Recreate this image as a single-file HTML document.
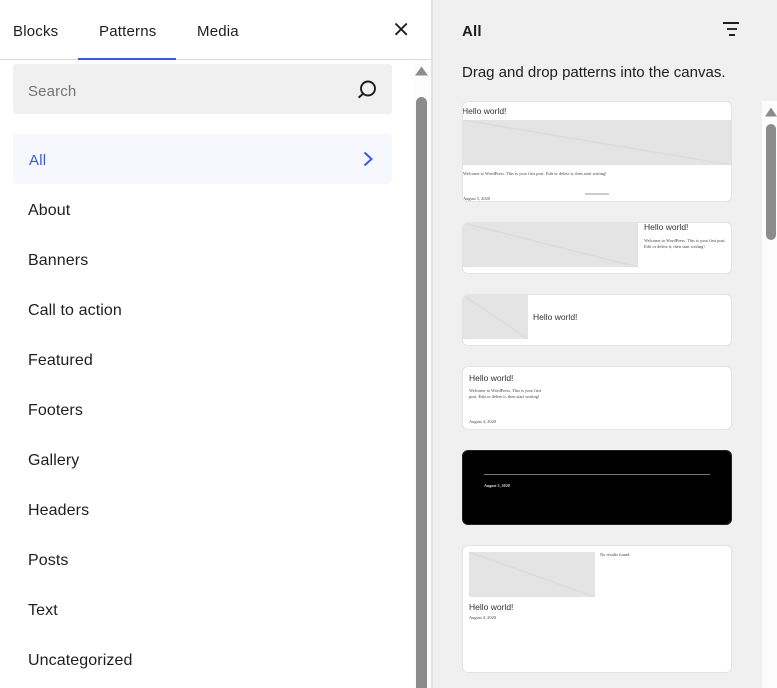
<!DOCTYPE html>
<html>
<head>
<meta charset="utf-8">
<style>
*{box-sizing:border-box}
html,body{margin:0;padding:0;width:777px;height:688px;overflow:hidden;background:#f0f0f0;font-family:"Liberation Sans",sans-serif;color:#1e1e1e}
.a{position:absolute}
.t{position:absolute;white-space:nowrap;font-size:15px;line-height:20px;letter-spacing:.2px}
.l{position:absolute;left:28px;white-space:nowrap;font-size:16px;line-height:20px;letter-spacing:.1px}
.card{position:absolute;left:462px;width:270px;background:#fff;border:1px solid #e4e4e4;border-radius:6px;overflow:hidden}
.ph{position:absolute;background:#e4e4e4;overflow:hidden}
.ph svg{position:absolute;left:0;top:0;width:100%;height:100%}
.h{position:absolute;white-space:nowrap;font-size:8.5px;line-height:11px;color:#333}
.s{position:absolute;white-space:nowrap;font-size:4.4px;line-height:6px;color:#444;font-family:"Liberation Serif",serif}
</style>
</head>
<body>
<div class="a" style="left:0;top:0;width:431px;height:688px;background:#fff"></div>
<div class="a" style="left:431px;top:0;width:2px;height:688px;background:#e2e2e2"></div>
<div class="a" style="left:0;top:59px;width:431px;height:1px;background:#dcdcdc"></div>
<div class="a" style="left:78px;top:58px;width:98px;height:2px;background:#3858e9"></div>

<div class="t" style="left:13px;top:22px">Blocks</div>
<div class="t" style="left:99px;top:22px">Patterns</div>
<div class="t" style="left:197px;top:22px">Media</div>
<svg class="a" style="left:394px;top:22px" width="14" height="14" viewBox="0 0 14 14"><path d="M1.5 1.5L12.8 12.8M12.8 1.5L1.5 12.8" stroke="#1e1e1e" stroke-width="1.9" fill="none"/></svg>

<div class="a" style="left:13px;top:64px;width:379px;height:50px;background:#f0f0f0;border-radius:3px"></div>
<div class="t" style="left:28px;top:82px;color:#757575;letter-spacing:.15px">Search</div>
<svg class="a" style="left:356px;top:78px" width="22" height="22" viewBox="0 0 22 22"><circle cx="12" cy="10.5" r="7" stroke="#1e1e1e" stroke-width="1.9" fill="none"/><path d="M7.4 15.5L2.6 19.6" stroke="#1e1e1e" stroke-width="2" fill="none"/></svg>

<div class="a" style="left:13px;top:134px;width:379px;height:50px;background:#f7f8fe;border-radius:3px"></div>
<div class="t" style="left:29px;top:151px;color:#3858e9">All</div>
<svg class="a" style="left:360px;top:150px" width="16" height="18" viewBox="0 0 16 18"><path d="M4.5 2.5L11.5 9L4.5 15.5" stroke="#3858e9" stroke-width="2" fill="none"/></svg>

<div class="l" style="top:201px">About</div>
<div class="l" style="top:251px">Banners</div>
<div class="l" style="top:301px">Call to action</div>
<div class="l" style="top:351px">Featured</div>
<div class="l" style="top:401px">Footers</div>
<div class="l" style="top:451px">Gallery</div>
<div class="l" style="top:501px">Headers</div>
<div class="l" style="top:551px">Posts</div>
<div class="l" style="top:601px">Text</div>
<div class="l" style="top:651px">Uncategorized</div>

<div class="a" style="left:413px;top:60px;width:18px;height:628px;background:#fcfcfc"></div>
<div class="a" style="left:416px;top:97px;width:11px;height:591px;background:#8c8c8c;border-radius:6px 6px 0 0"></div>
<svg class="a" style="left:415px;top:66px" width="13" height="10" viewBox="0 0 13 10"><path d="M6.5 0.5L13 9.5H0Z" fill="#8c8c8c"/></svg>

<div class="t" style="left:462px;top:22px;font-weight:bold">All</div>
<div class="a" style="left:723px;top:22px;width:16px;height:2px;background:#1e1e1e"></div>
<div class="a" style="left:727px;top:28px;width:10px;height:2px;background:#333"></div>
<div class="a" style="left:729px;top:34px;width:6px;height:2px;background:#1e1e1e"></div>
<div class="t" style="left:462px;top:63px;letter-spacing:0">Drag and drop patterns into the canvas.</div>

<div class="card" style="top:101px;height:101px">
  <div class="h" style="left:-1px;top:4px">Hello world!</div>
  <div class="ph" style="left:0;top:18px;width:269px;height:45px">
    <svg viewBox="0 0 269 45" preserveAspectRatio="none"><path d="M0 0L269 45" stroke="#dcdcdc" stroke-width="1.5" fill="none"/></svg>
  </div>
  <div class="s" style="left:0;top:69px">Welcome to WordPress. This is your first post. Edit or delete it, then start writing!</div>
  <div class="a" style="left:122px;top:91px;width:24px;height:2px;background:#ccc"></div>
  <div class="s" style="left:0;top:94px">August 5, 2020</div>
</div>

<div class="card" style="top:222px;height:52px">
  <div class="ph" style="left:0;top:0;width:175px;height:44px">
    <svg viewBox="0 0 175 44" preserveAspectRatio="none"><path d="M0 0L175 44" stroke="#dcdcdc" stroke-width="1.5" fill="none"/></svg>
  </div>
  <div class="h" style="left:181px;top:-1px">Hello world!</div>
  <div class="s" style="left:181px;top:15px">Welcome to WordPress. This is your first post.</div>
  <div class="s" style="left:181px;top:21px">Edit or delete it, then start writing!</div>
</div>

<div class="card" style="top:294px;height:52px">
  <div class="ph" style="left:0;top:0;width:65px;height:44px">
    <svg viewBox="0 0 65 44" preserveAspectRatio="none"><path d="M0 0L65 44" stroke="#dcdcdc" stroke-width="1.5" fill="none"/></svg>
  </div>
  <div class="h" style="left:70px;top:17px">Hello world!</div>
</div>

<div class="card" style="top:366px;height:64px">
  <div class="h" style="left:6px;top:6px">Hello world!</div>
  <div class="s" style="left:6px;top:21px">Welcome to WordPress. This is your first</div>
  <div class="s" style="left:6px;top:27px">post. Edit or delete it, then start writing!</div>
  <div class="s" style="left:6px;top:52px">August 4, 2020</div>
</div>

<div class="card" style="top:450px;height:75px;background:#000;border-color:#222">
  <div class="a" style="left:21px;top:23px;width:226px;height:1px;background:#777"></div>
  <div class="s" style="left:21px;top:32px;color:#ddd;font-weight:bold;font-size:4.1px">August 5, 2020</div>
</div>

<div class="card" style="top:545px;height:128px">
  <div class="ph" style="left:6px;top:6px;width:126px;height:45px">
    <svg viewBox="0 0 126 45" preserveAspectRatio="none"><path d="M0 0L126 45" stroke="#dcdcdc" stroke-width="1.5" fill="none"/></svg>
  </div>
  <div class="s" style="left:137px;top:6px">No results found.</div>
  <div class="h" style="left:6px;top:56px">Hello world!</div>
  <div class="s" style="left:6px;top:69px">August 4, 2020</div>
</div>

<div class="a" style="left:762px;top:101px;width:15px;height:587px;background:#fcfcfc"></div>
<div class="a" style="left:766px;top:124px;width:10px;height:116px;background:#8c8c8c;border-radius:5px"></div>
<svg class="a" style="left:765px;top:107px" width="12" height="10" viewBox="0 0 12 10"><path d="M6 0.5L12 9.5H0Z" fill="#8c8c8c"/></svg>
</body>
</html>
